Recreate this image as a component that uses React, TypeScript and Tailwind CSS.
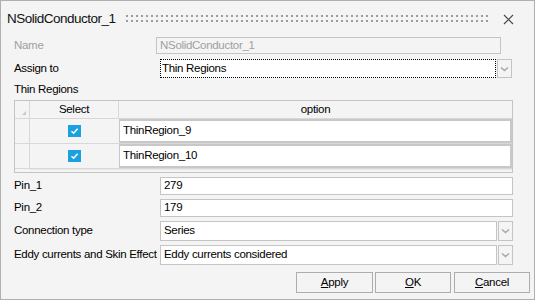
import React from "react";

const Chevron = () => (
  <svg width="9" height="6" viewBox="0 0 9 6">
    <path d="M1 1.5 L4.5 4.5 L8 1.5" fill="none" stroke="#a8a8a8" strokeWidth="1.6" />
  </svg>
);

const Check = () => (
  <div className="w-[13px] h-[12px] bg-[#1ba1e2] flex items-center justify-center">
    <svg width="9" height="8" viewBox="0 0 9 8">
      <path d="M1.5 4.2 L3.6 6.2 L7.6 1.8" fill="none" stroke="#ffffff" strokeWidth="1.5" />
    </svg>
  </div>
);

function Combo({ value, focused, top }: { value: string; focused?: boolean; top?: boolean }) {
  return (
    <div className="flex gap-[1px]">
      <div
        className={
          focused
            ? "w-[336px] h-[19px] bg-white border border-dotted border-black flex items-center pl-[1px]"
            : "w-[337px] h-[20px] bg-white border border-[#c4c4c4] flex items-center pl-[3px]"
        }
      >
        {value}
      </div>
      <div
        className={
          (top ? "h-[19px]" : "h-[20px]") +
          " w-[15px] border border-[#c4c4c4] bg-[#f4f4f4] flex items-center justify-center"
        }
      >
        <Chevron />
      </div>
    </div>
  );
}

export default function App() {
  return (
    <div className="w-[535px] h-[300px] border border-[#b0b0b0] bg-[#f4f4f4] text-[11.5px] leading-none text-black font-['Liberation_Sans',Arial,sans-serif] tracking-[-0.3px] flex flex-col whitespace-nowrap">
      {/* title bar */}
      <div className="h-[36px] flex items-center pl-[6px]">
        <span className="w-[119px] text-[13.5px] tracking-[-0.5px] text-[#111]">NSolidConductor_1</span>
        <svg width="367" height="8" className="shrink-0">
          <defs>
            <pattern id="dots" width="5" height="5" patternUnits="userSpaceOnUse">
              <rect x="0" y="0" width="2" height="2" fill="#9c9c9c" />
            </pattern>
          </defs>
          <rect x="0" y="0" width="365" height="7" fill="url(#dots)" />
        </svg>
        <svg width="11" height="11" viewBox="0 0 11 11" className="ml-[10px]">
          <path d="M1 1 L10 10 M10 1 L1 10" stroke="#444" strokeWidth="1.1" />
        </svg>
      </div>

      {/* Name */}
      <div className="flex items-center h-[17px] pl-[13px]">
        <span className="w-[142px] shrink-0 text-[#a0a0a0]">Name</span>
        <div className="w-[345px] h-[17px] border border-[#c4c4c4] flex items-center pl-[3px] text-[#a0a0a0]">
          NSolidConductor_1
        </div>
      </div>

      {/* Assign to */}
      <div className="flex items-center h-[19px] mt-[5px] pl-[13px]">
        <span className="w-[146px] shrink-0">Assign to</span>
        <Combo value="Thin Regions" focused top />
      </div>

      <div className="pl-[13px] mt-[6px] h-[12px] flex items-center">Thin Regions</div>

      {/* grid */}
      <div className="ml-[13px] mt-[4px] w-[499px] h-[73px] border border-[#c4c4c4] bg-[#f4f4f4] flex flex-col">
        <div className="flex h-[18px] border-b border-[#d8d8d8]">
          <div className="w-[15px] border-r border-[#d8d8d8] relative">
            <div className="absolute right-[3px] bottom-[3px] w-0 h-0 border-l-[4px] border-l-transparent border-b-[4px] border-b-[#c8c8c8]" />
          </div>
          <div className="w-[89px] border-r border-[#d8d8d8] flex items-center justify-center">Select</div>
          <div className="flex-1 flex items-center justify-center">option</div>
        </div>
        {["ThinRegion_9", "ThinRegion_10"].map((r) => (
          <div key={r} className="flex h-[25px] border-b border-[#d8d8d8]">
            <div className="w-[15px] border-r border-[#d8d8d8]" />
            <div className="w-[89px] flex items-center justify-center">
              <Check />
            </div>
            <div className="flex-1 bg-white border-2 border-[#c8c8c8] border-l-[1px] flex items-center pl-[3px]">
              {r}
            </div>
          </div>
        ))}
        <div className="flex-1 flex">
          <div className="w-[15px]" />
          <div className="flex-1 border-t border-[#e6e6e6]" />
        </div>
      </div>

      {/* Pin_1 */}
      <div className="flex items-center h-[18px] mt-[4px] pl-[13px]">
        <span className="w-[146px] shrink-0">Pin_1</span>
        <div className="w-[353px] h-[18px] bg-white border border-[#c4c4c4] flex items-center pl-[3px]">279</div>
      </div>
      <div className="flex items-center h-[18px] mt-[4px] pl-[13px]">
        <span className="w-[146px] shrink-0">Pin_2</span>
        <div className="w-[353px] h-[18px] bg-white border border-[#c4c4c4] flex items-center pl-[3px]">179</div>
      </div>
      <div className="flex items-center h-[20px] mt-[4px] pl-[13px]">
        <span className="w-[146px] shrink-0">Connection type</span>
        <Combo value="Series" />
      </div>
      <div className="flex items-center h-[20px] mt-[4px] pl-[13px]">
        <span className="w-[146px] shrink-0">Eddy currents and Skin Effect</span>
        <Combo value="Eddy currents considered" />
      </div>

      {/* buttons */}
      <div className="flex mt-[7px] pl-[295px] gap-[2px]">
        <button className="w-[77px] h-[21px] border border-[#adadad] bg-[#f4f4f4] flex items-center justify-center">
          <span><span className="underline">A</span>pply</span>
        </button>
        <button className="w-[76px] h-[21px] border border-[#adadad] bg-[#f4f4f4] flex items-center justify-center">
          <span><span className="underline">O</span>K</span>
        </button>
        <button className="w-[76px] h-[21px] border border-[#adadad] bg-[#f4f4f4] flex items-center justify-center ml-[1px]">
          <span><span className="underline">C</span>ancel</span>
        </button>
      </div>
    </div>
  );
}
